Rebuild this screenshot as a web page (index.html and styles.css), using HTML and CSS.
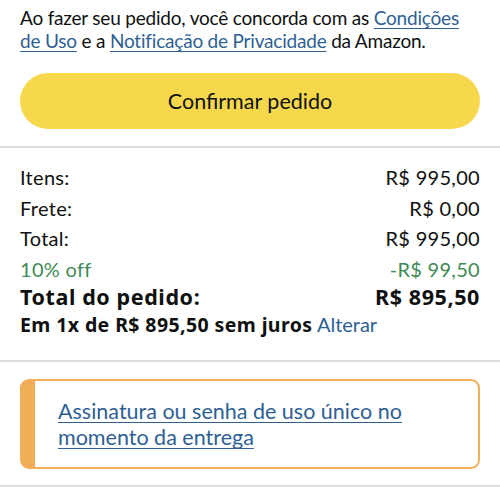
FILE: index.html
```html
<!DOCTYPE html>
<html lang="pt-BR">
<head>
<meta charset="utf-8">
<link rel="stylesheet" href="styles.css">
</head>
<body>
<div class="terms">Ao fazer seu pedido, você concorda com as <a href="#">Condições de Uso</a> e a <a href="#">Notificação de Privacidade</a> da Amazon.</div>
<div class="btn-wrap"><button class="confirm">Confirmar pedido</button></div>
<hr class="divider">
<div class="summary">
  <div class="row"><span>Itens:</span><span>R$ 995,00</span></div>
  <div class="row"><span>Frete:</span><span>R$ 0,00</span></div>
  <div class="row"><span>Total:</span><span>R$ 995,00</span></div>
  <div class="row green"><span>10% off</span><span>-R$ 99,50</span></div>
  <div class="row total"><span>Total do pedido:</span><span>R$ 895,50</span></div>
  <div class="install"><b>Em 1x de R$ 895,50 sem juros</b> <a class="plain" href="#">Alterar</a></div>
</div>
<hr class="divider">
<div class="box-wrap">
  <div class="box"><a href="#">Assinatura ou senha de uso único no momento da entrega</a></div>
</div>
<hr class="divider">
</body>
</html>
```
FILE: styles.css
```css
html, body { margin: 0; padding: 0; background: #fff; }
body { font-family: Lato, "Noto Sans", sans-serif; color: #0f1111; font-size: 19px; }
a { color: #2e5f93; text-decoration: underline; text-underline-offset: 3px; text-decoration-thickness: 1px; }
a.plain { text-decoration: none; }
.terms { padding: 6px 20px 0; line-height: 23px; letter-spacing: -0.2px; }
.btn-wrap { padding: 21px 20px 17px; }
.confirm { display: block; width: 100%; height: 56px; border: none; border-radius: 28px; background: #f7d84c; font-family: inherit; font-size: 21.5px; color: #0f1111; padding: 0; }
.divider { margin: 0; border: none; height: 2px; background: #dddddd; }
.summary { padding: 14px 20px 22px; }
.row { display: flex; justify-content: space-between; font-size: 20px; line-height: 30.6px; letter-spacing: 0.3px; }
.row.green { color: #3f8a55; }
.row.total { font-family: "Noto Sans", sans-serif; font-weight: 700; font-size: 21.5px; line-height: 26.5px; letter-spacing: 0.6px; }
.install { line-height: 26.5px; font-size: 20px; }
.install b { font-family: "Noto Sans", sans-serif; font-weight: 700; font-size: 19.5px; letter-spacing: 0.4px; }
.box-wrap { padding: 17px 20px 16px; }
.box { border: 2px solid #f0ae58; border-left: 15px solid #f0ae58; border-radius: 9px; padding: 17px 40px 17px 23px; line-height: 26px; font-size: 21.5px; }
```
